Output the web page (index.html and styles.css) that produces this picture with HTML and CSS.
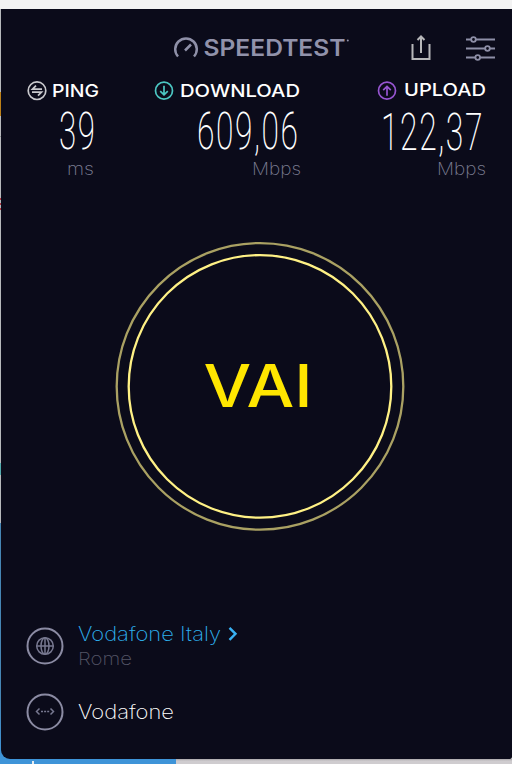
FILE: index.html
```html
<!DOCTYPE html>
<html lang="it">
<head>
<meta charset="utf-8">
<title>Speedtest</title>
<link rel="stylesheet" href="styles.css">
</head>
<body>
<main class="panel">
  <header class="header">
    <div class="brand">
      <svg class="brand-mark" width="26" height="22" viewBox="0 0 26 22"><path d="M5 19.5A10.8 10.8 0 1 1 21 19.5M12 13.5L18 7.5"/></svg>
      <svg class="brand-name" width="145" height="22"><text x="-0.5" y="19" textLength="142" lengthAdjust="spacingAndGlyphs">SPEEDTEST</text><circle cx="143.8" cy="3.5" r="1"/></svg>
    </div>
    <svg class="share" width="20" height="26" viewBox="0 0 20 26"><path d="M1.5 9V24H18.5V9M10 18V2M6.5 5L10 1.5L13.5 5"/></svg>
    <svg class="sliders" width="32" height="24" viewBox="0 0 32 24"><path d="M1 3.5H6M11 3.5H30M1 12.5H20M25 12.5H30M1 21.5H10M15 21.5H30"/><circle cx="8.5" cy="3.5" r="2.3"/><circle cx="22.5" cy="12.5" r="2.3"/><circle cx="12.7" cy="21.5" r="2.3"/></svg>
  </header>
  <section class="metrics">
    <div class="metric ping">
      <div class="metric-title">
        <svg class="badge" width="20" height="20" viewBox="0 0 20 20"><circle cx="10" cy="9.7" r="8.8"/><path d="M15 8.2H5.5L9 4.7M5 11.2H14.5L11 14.7"/></svg>
        <svg class="label" width="46" height="20"><text x="-1" y="16" textLength="47" lengthAdjust="spacingAndGlyphs">PING</text></svg>
      </div>
      <svg class="value" width="36" height="56"><text x="-1" y="47.5" textLength="37.5" lengthAdjust="spacingAndGlyphs">39</text></svg>
      <svg class="unit" width="27" height="20"><text x="0" y="15" textLength="27" lengthAdjust="spacingAndGlyphs">ms</text></svg>
    </div>
    <div class="metric download">
      <div class="metric-title">
        <svg class="badge" width="20" height="20" viewBox="0 0 20 20"><circle cx="10" cy="9.7" r="8.5"/><path d="M10 4.7V13.7M6.2 10.2L10 13.9L13.8 10.2"/></svg>
        <svg class="label" width="119" height="20"><text x="-1" y="16" textLength="120" lengthAdjust="spacingAndGlyphs">DOWNLOAD</text></svg>
      </div>
      <svg class="value" width="99" height="56"><text x="-2" y="47.5" textLength="102.5" lengthAdjust="spacingAndGlyphs">609,06</text></svg>
      <svg class="unit" width="49" height="20"><text x="0" y="15" textLength="49" lengthAdjust="spacingAndGlyphs">Mbps</text></svg>
    </div>
    <div class="metric upload">
      <div class="metric-title">
        <svg class="badge" width="20" height="20" viewBox="0 0 20 20"><circle cx="10" cy="9.7" r="8.5"/><path d="M10 14.7V5.7M6.2 9.2L10 5.5L13.8 9.2"/></svg>
        <svg class="label" width="81" height="20"><text x="-1" y="15" textLength="82" lengthAdjust="spacingAndGlyphs">UPLOAD</text></svg>
      </div>
      <svg class="value" width="100" height="56"><text x="-2" y="48.5" textLength="103" lengthAdjust="spacingAndGlyphs">122,37</text></svg>
      <svg class="unit" width="49" height="20"><text x="0" y="15" textLength="49" lengthAdjust="spacingAndGlyphs">Mbps</text></svg>
    </div>
  </section>
  <button class="go">
    <svg width="290" height="290" viewBox="0 0 290 290"><circle class="outer" cx="145" cy="145.4" r="143.3"/><circle class="inner" cx="145" cy="145.4" r="131.3"/><text x="88.5" y="166" textLength="109" lengthAdjust="spacingAndGlyphs">VAI</text></svg>
  </button>
  <footer class="connection">
    <div class="row server">
      <svg class="ring" width="38" height="38" viewBox="0 0 38 38"><circle cx="19" cy="19" r="17.5"/><g class="glyph"><circle cx="19" cy="19" r="8.3"/><ellipse cx="19" cy="19" rx="4" ry="8.3"/><path d="M19 10.7V27.3M10.7 19H27.3"/></g></svg>
      <div class="details">
        <div class="link">
          <svg class="name" width="143" height="26"><text x="0" y="19.5" textLength="143" lengthAdjust="spacingAndGlyphs">Vodafone Italy</text></svg>
          <svg class="chevron" width="10" height="14" viewBox="0 0 10 14"><path d="M1.5 0.8L7.5 6.8L1.5 12.8"/></svg>
        </div>
        <svg class="place" width="54" height="22"><text x="0" y="17.5" textLength="54" lengthAdjust="spacingAndGlyphs">Rome</text></svg>
      </div>
    </div>
    <div class="row provider">
      <svg class="ring" width="38" height="38" viewBox="0 0 38 38"><circle cx="19" cy="19" r="17.5"/><path class="glyph" d="M13.5 15.5L10.5 18.5L13.5 21.5M24.5 15.5L27.5 18.5L24.5 21.5M15 18.5H17M18.1 18.5H20.1M21.2 18.5H23.2"/></svg>
      <svg class="name" width="96" height="26"><text x="0" y="20" textLength="96" lengthAdjust="spacingAndGlyphs">Vodafone</text></svg>
    </div>
  </footer>
</main>
</body>
</html>
```
FILE: styles.css
```css
* { box-sizing: border-box; }

html { height: 100%; }

body {
  margin: 0;
  height: 764px;
  padding: 9px 0 5px 1px;
  overflow: hidden;
  font-family: Inter, "Open Sans", sans-serif;
  background:
    linear-gradient(#f3f3f3, #f3f3f3) 0 0 / 512px 9px no-repeat,
    linear-gradient(#e9edf1, #e9edf1) 32px 761px / 2px 3px no-repeat,
    linear-gradient(#3e94d8, #3e94d8) 0 759px / 176px 5px no-repeat,
    linear-gradient(#aaa7aa, #cfcccf 2px) 176px 759px / 336px 5px no-repeat,
    linear-gradient(#b7b9bc 0 83px, #bd8118 83px 107px, #b7b9bc 107px 127px, #929497 127px 128px, #b7b9bc 128px 189px, #b53c48 189px 191px, #b7b9bc 191px 194px, #b53c48 194px 196px, #b7b9bc 196px 199px, #b53c48 199px 201px, #b7b9bc 201px 454px, #52abae 454px 466px, #b7b9bc 466px 514px, #4686b4 514px 690px, #3e94d8 750px) 0 9px / 20px 750px no-repeat;
}

svg { display: block; flex: none; overflow: visible; fill: none; }

.panel {
  display: flex;
  flex-direction: column;
  width: 511px;
  height: 750px;
  background: #0b0b1a;
  border-radius: 0 0 2px 9px;
}

.header {
  display: flex;
  align-items: center;
  height: 72px;
  padding: 5px 15px 0 172px;
}

.brand { display: flex; gap: 5px; }
.brand-mark { stroke: #8f90a8; stroke-width: 2.5; }
.brand-name { fill: #9192aa; font-size: 23px; font-weight: 600; }
.share { margin-left: 62px; stroke: #b7b7b9; stroke-width: 2; }
.sliders { margin-left: auto; stroke: #8e8fa7; stroke-width: 1.8; }

.metrics {
  display: grid;
  grid-template-columns: 98px 202px 185px;
  height: 103px;
}

.metric { display: flex; flex-direction: column; align-items: flex-end; }
.metric-title { display: flex; height: 20px; }
.badge { stroke-width: 1.7; }
.label { fill: #fff; font-size: 17.2px; font-weight: 550; }
.value { fill: #fff; font-family: Roboto, sans-serif; font-size: 51px; font-weight: 200; letter-spacing: 2.5px; }
.unit { margin-top: 3px; margin-bottom: 4px; fill: #7c7d92; font-size: 17px; font-weight: 200; }

.ping .metric-title { gap: 6px; }
.ping .badge { stroke: #c9c9cd; }
.ping .value { margin-right: 3px; }
.ping .unit { margin-right: 5px; }
.download .metric-title { gap: 7px; margin-right: 1px; }
.download .badge { stroke: #4cc7c3; }
.download .value { margin-right: 3px; }
.upload .metric-title { gap: 8px; }
.upload .badge { stroke: #9755d1; }
.upload .value { margin-right: 3px; }

.go {
  align-self: flex-start;
  margin: 57px 0 0 114px;
  padding: 0;
  border: 0;
  background: none;
  font-family: inherit;
}

.go .outer { stroke: #aaa163; stroke-width: 2.3; }
.go .inner { stroke: #fff185; stroke-width: 2.3; }
.go text { fill: #ffe600; font-size: 59px; font-weight: 550; }

.connection { padding: 87px 0 0 25px; }
.row { display: flex; align-items: center; gap: 14px; }
.server { height: 56px; }
.provider { height: 38px; margin-top: 19px; }
.ring { stroke: #8b8ba3; stroke-width: 2; }
.ring .glyph { stroke: #777890; stroke-width: 1.5; }
.details { display: flex; flex-direction: column; margin-top: -3px; }
.link { display: flex; align-items: center; gap: 7px; }
.name { fill: #fff; font-size: 19.5px; font-weight: 250; }
.link .name { fill: #2eb0ee; }
.chevron { stroke: #39b1f3; stroke-width: 2.4; }
.place { fill: #545566; font-size: 17px; font-weight: 250; }
```
